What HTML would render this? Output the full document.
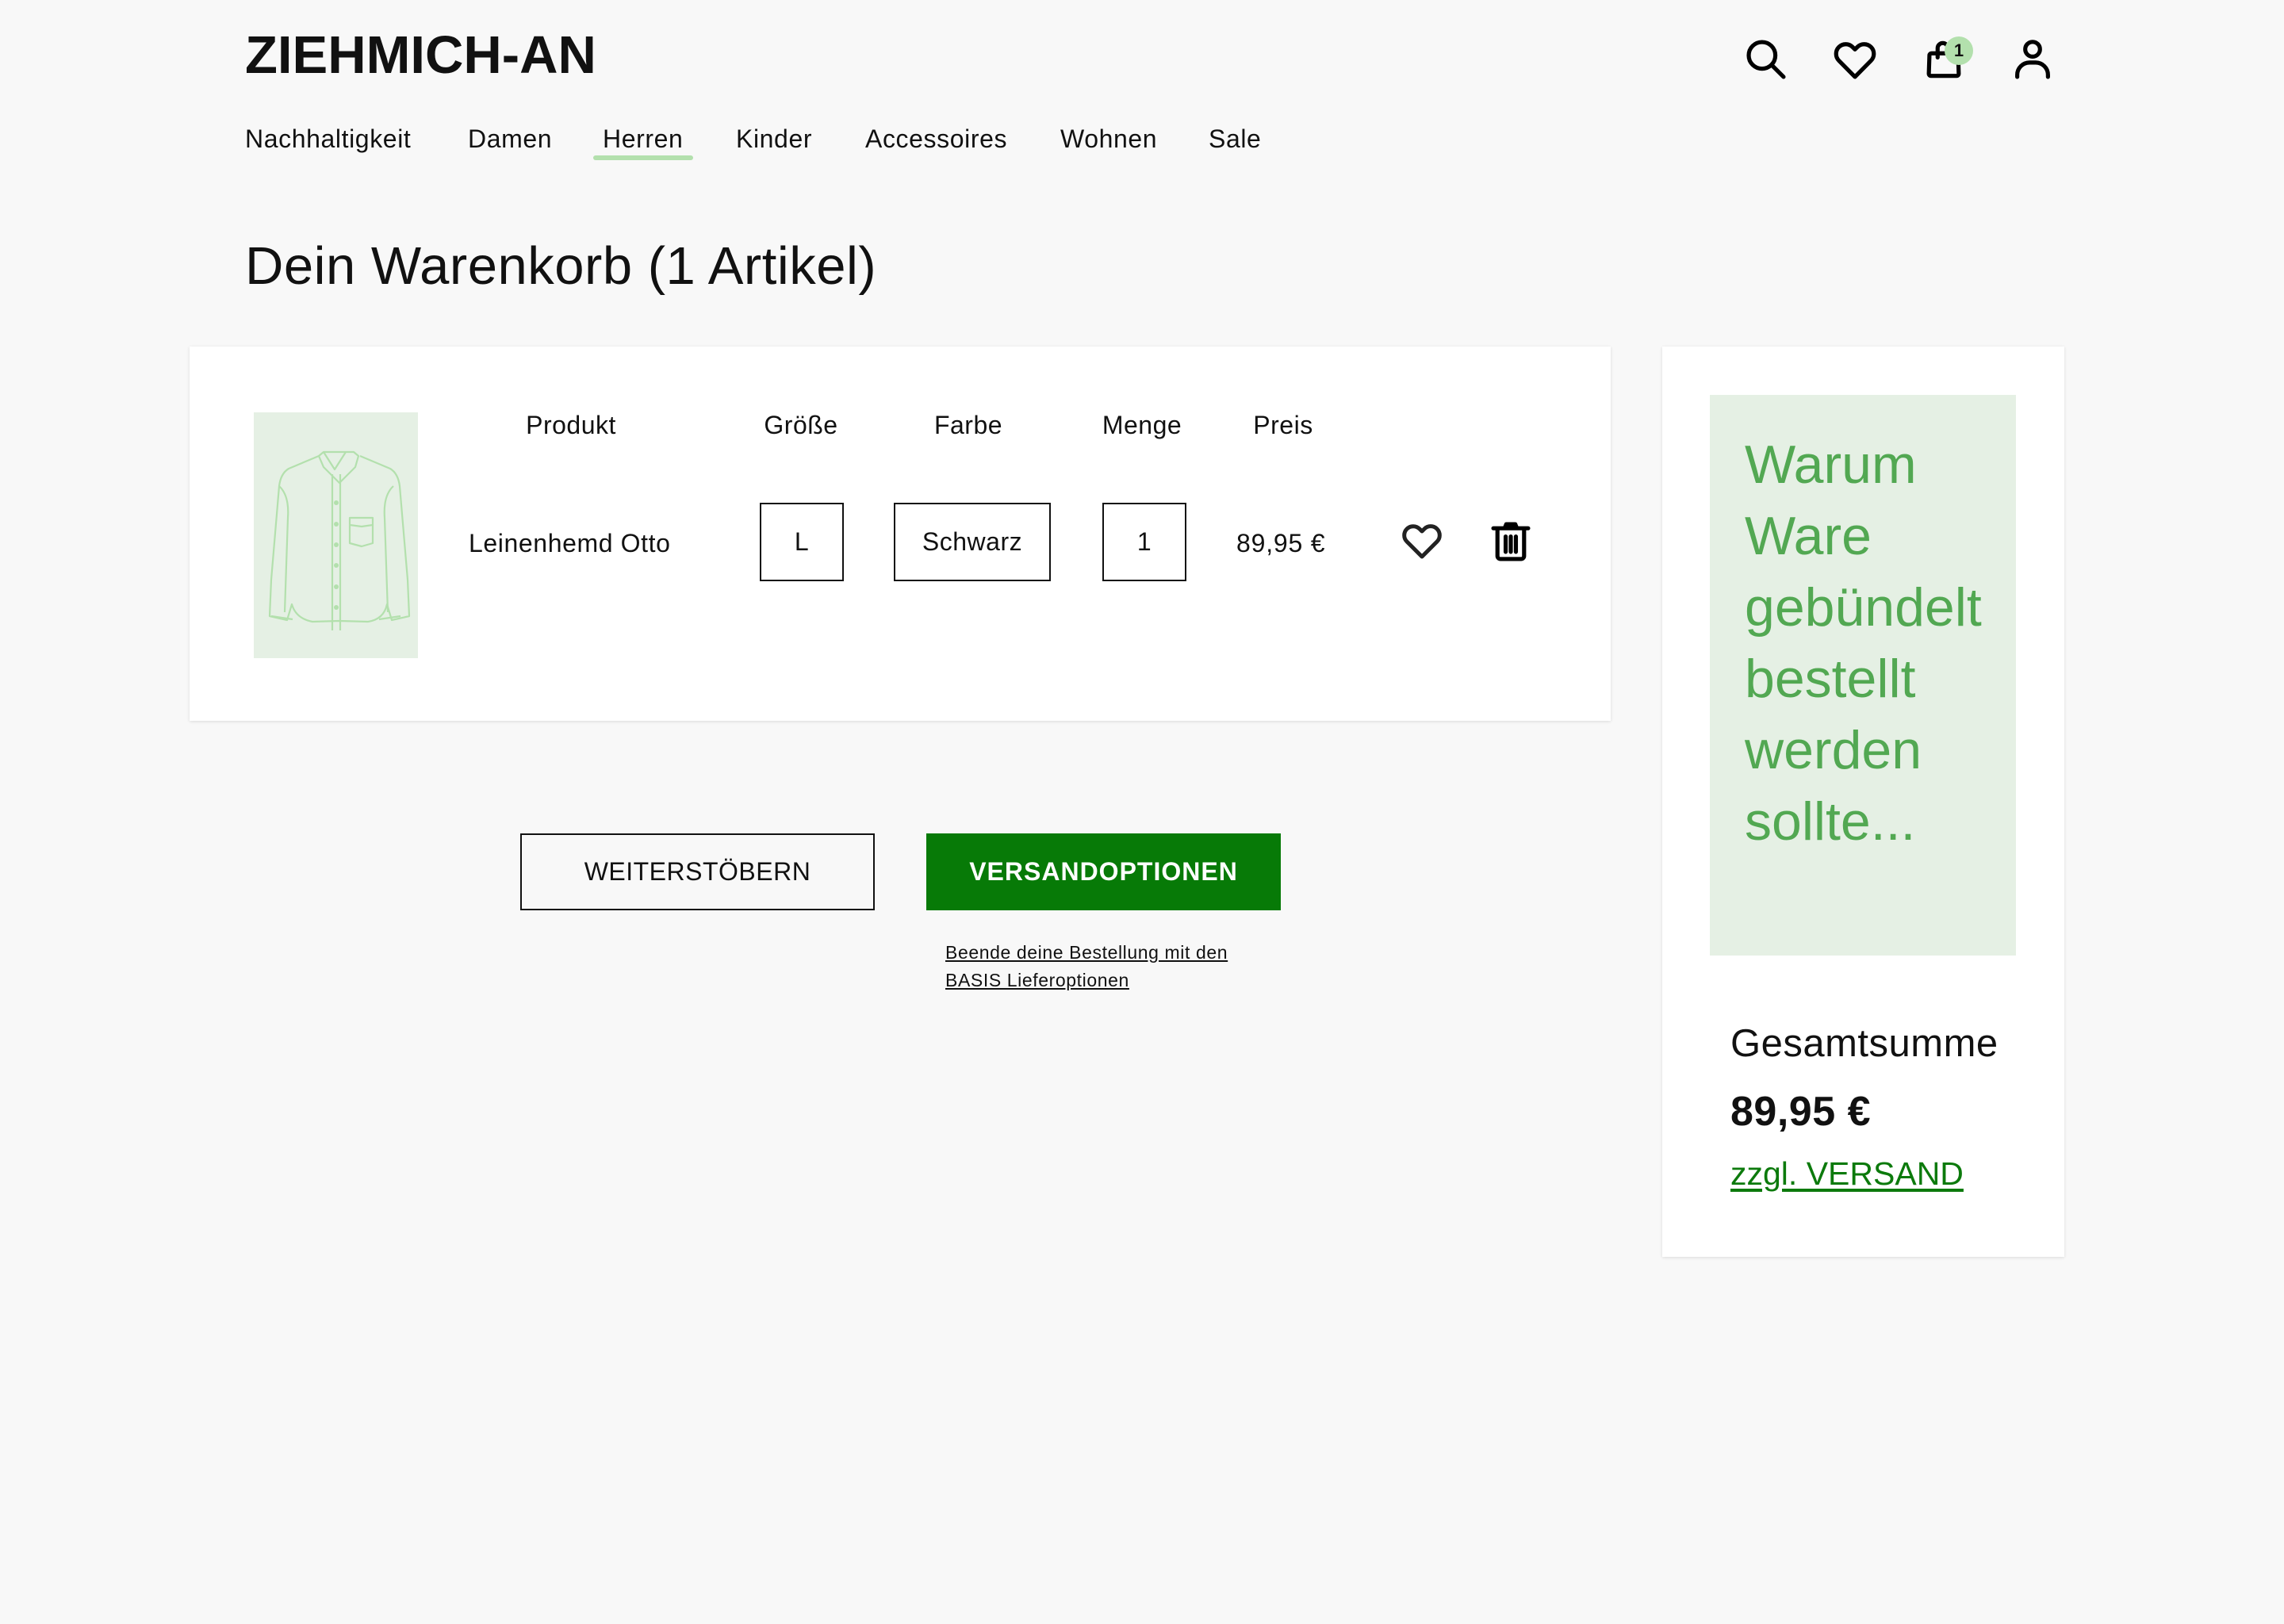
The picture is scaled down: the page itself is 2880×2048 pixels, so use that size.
<!DOCTYPE html>
<html><head><meta charset="utf-8"><style>
*{margin:0;padding:0;box-sizing:border-box}
body{width:2880px;height:2048px;background:#f8f8f8;font-family:"Liberation Sans",sans-serif;color:#111;position:relative;overflow:hidden}
.a{position:absolute;white-space:nowrap}
.nav{top:155px;font-size:32px;line-height:40px;letter-spacing:0.6px}
.card{position:absolute;background:#fff;box-shadow:0 1px 4px rgba(0,0,0,.12)}
.h{top:516px;font-size:32px;line-height:40px;transform:translateX(-50%);letter-spacing:0.5px}
.box{position:absolute;top:634px;height:99px;border:2px solid #111;font-size:32px;display:flex;align-items:center;justify-content:center;letter-spacing:0.5px}
.g{left:2200px;font-size:68px;line-height:90px;color:#52a852}
</style></head><body>
<div class="a" style="left:309px;top:30px;font-size:67px;font-weight:bold;line-height:80px">ZIEHMICH-AN</div>
<div class="a nav" style="left:309px">Nachhaltigkeit</div>
<div class="a nav" style="left:590px">Damen</div>
<div class="a nav" style="left:760px">Herren</div>
<div class="a" style="left:748px;top:196px;width:126px;height:6px;border-radius:3px;background:#b3e0ad"></div>
<div class="a nav" style="left:928px">Kinder</div>
<div class="a nav" style="left:1091px">Accessoires</div>
<div class="a nav" style="left:1337px">Wohnen</div>
<div class="a nav" style="left:1524px">Sale</div>

<svg class="a" style="left:2196px;top:44px" width="62" height="62" viewBox="0 0 24 24" fill="none" stroke="#000" stroke-width="2" stroke-linecap="round"><circle cx="10" cy="10" r="6.5"/><path d="M15 15l5.5 5.5"/></svg>
<svg class="a" style="left:2308px;top:44px" width="62" height="62" viewBox="0 0 24 24" fill="none" stroke="#000" stroke-width="2" stroke-linejoin="round"><path d="M12 20.5L4.2 12.6a4.7 4.7 0 0 1 6.6-6.7L12 7.1l1.2-1.2a4.7 4.7 0 0 1 6.6 6.7z"/></svg>
<svg class="a" style="left:2420px;top:44px" width="62" height="62" viewBox="0 0 24 24" fill="none" stroke="#000" stroke-width="2" stroke-linecap="round" stroke-linejoin="round"><path d="M6 9h12a1 1 0 0 1 1 1l.3 9a1 1 0 0 1-1 1H5.7a1 1 0 0 1-1-1l.3-9a1 1 0 0 1 1-1z"/><path d="M9 11V6.5a2.5 2.5 0 0 1 5 0"/></svg>
<div class="a" style="left:2452px;top:46px;width:36px;height:36px;border-radius:50%;background:#b3e0ad;font-size:22px;font-weight:bold;line-height:36px;text-align:center">1</div>
<svg class="a" style="left:2532px;top:44px" width="62" height="62" viewBox="0 0 24 24" fill="none" stroke="#000" stroke-width="2" stroke-linecap="round"><circle cx="12" cy="7" r="3.6"/><path d="M4.5 20.5v-1a6 6 0 0 1 6-6h3a6 6 0 0 1 6 6v1"/></svg>

<div class="a" style="left:309px;top:296px;font-size:67px;line-height:80px;letter-spacing:0.5px">Dein Warenkorb (1 Artikel)</div>

<div class="card" style="left:239px;top:437px;width:1792px;height:472px"></div>
<div class="a" style="left:320px;top:520px;width:207px;height:310px;background:#e5f0e4">
<svg width="207" height="310" viewBox="0 0 207 310" fill="none" stroke="#b3e0ad" stroke-width="2.2" stroke-linejoin="round">
<path d="M82 55l-38 16q-10 6-12 22l-10 118-2 46 22 5 6-20q5 18 26 22l34-1 36 1q20-3 24-22l6 20 22-5-2-46-10-118q-2-16-12-22l-38-16"/>
<path d="M82 55l6-5h38l6 5-4 14-20 20-20-20z M88 50l14 22 14-22"/>
<path d="M22 257l27 4 M185 257l-27 4 M32 93q13 12 11 40l-4 119 M176 93q-13 12-11 40l4 119"/>
<path d="M99 78v197 M109 78v197"/>
<path d="M121 133h29v32l-14 4-15-4z M121 142l15 2 14-2"/>
<g fill="#b3e0ad" stroke="none"><circle cx="104" cy="114" r="3"/><circle cx="104" cy="141" r="3"/><circle cx="104" cy="167" r="3"/><circle cx="104" cy="193" r="3"/><circle cx="104" cy="220" r="3"/><circle cx="104" cy="246" r="3"/></g>
</svg></div>
<div class="a h" style="left:720px">Produkt</div>
<div class="a h" style="left:1010px">Größe</div>
<div class="a h" style="left:1221px">Farbe</div>
<div class="a h" style="left:1440px">Menge</div>
<div class="a h" style="left:1618px">Preis</div>
<div class="a" style="left:591px;top:665px;font-size:32px;line-height:40px;letter-spacing:0.6px">Leinenhemd Otto</div>
<div class="box" style="left:958px;width:106px">L</div>
<div class="box" style="left:1127px;width:198px">Schwarz</div>
<div class="box" style="left:1390px;width:106px">1</div>
<div class="a" style="left:1559px;top:665px;font-size:32px;line-height:40px;letter-spacing:0.8px">89,95 €</div>
<svg class="a" style="left:1763px;top:652px" width="60" height="60" viewBox="0 0 24 24" fill="none" stroke="#222" stroke-width="2" stroke-linejoin="round"><path d="M12 20L4.4 12.4a4.5 4.5 0 0 1 6.4-6.4L12 7.2l1.2-1.2a4.5 4.5 0 0 1 6.4 6.4z"/></svg>
<svg class="a" style="left:1874px;top:652px" width="62" height="62" viewBox="0 0 24 24" fill="none" stroke="#000" stroke-width="2" stroke-linecap="round" stroke-linejoin="round"><path d="M3.5 5.5h17 M9 5.5l.8-2h4.4l.8 2 M5.5 6v13a1.5 1.5 0 0 0 1.5 1.5h10a1.5 1.5 0 0 0 1.5-1.5V6 M9.5 9.5v7.5 M12 9.5v7.5 M14.5 9.5v7.5"/></svg>

<div class="a" style="left:656px;top:1051px;width:447px;height:97px;border:2px solid #111;font-size:32px;display:flex;align-items:center;justify-content:center;letter-spacing:0.5px">WEITERSTÖBERN</div>
<div class="a" style="left:1168px;top:1051px;width:447px;height:97px;background:#077a07;color:#fff;font-size:32px;font-weight:bold;letter-spacing:1px;display:flex;align-items:center;justify-content:center">VERSANDOPTIONEN</div>
<div class="a" style="left:1192px;top:1184px;font-size:23px;line-height:35px;text-decoration:underline;letter-spacing:0.6px">Beende deine Bestellung mit den<br>BASIS Lieferoptionen</div>

<div class="card" style="left:2096px;top:437px;width:507px;height:1148px"></div>
<div class="a" style="left:2156px;top:498px;width:386px;height:707px;background:#e5f0e4"></div>
<div class="a g" style="top:541px">Warum</div>
<div class="a g" style="top:631px">Ware</div>
<div class="a g" style="top:721px">gebündelt</div>
<div class="a g" style="top:811px">bestellt</div>
<div class="a g" style="top:901px">werden</div>
<div class="a g" style="top:991px">sollte...</div>
<div class="a" style="left:2182px;top:1288px;font-size:49px;line-height:56px;letter-spacing:0.5px">Gesamtsumme</div>
<div class="a" style="left:2182px;top:1372px;font-size:52px;font-weight:bold;line-height:60px;letter-spacing:0.5px">89,95 €</div>
<div class="a" style="left:2182px;top:1455px;font-size:41px;line-height:50px;color:#0c7a0c;text-decoration:underline;text-underline-offset:5px">zzgl. VERSAND</div>
</body></html>
